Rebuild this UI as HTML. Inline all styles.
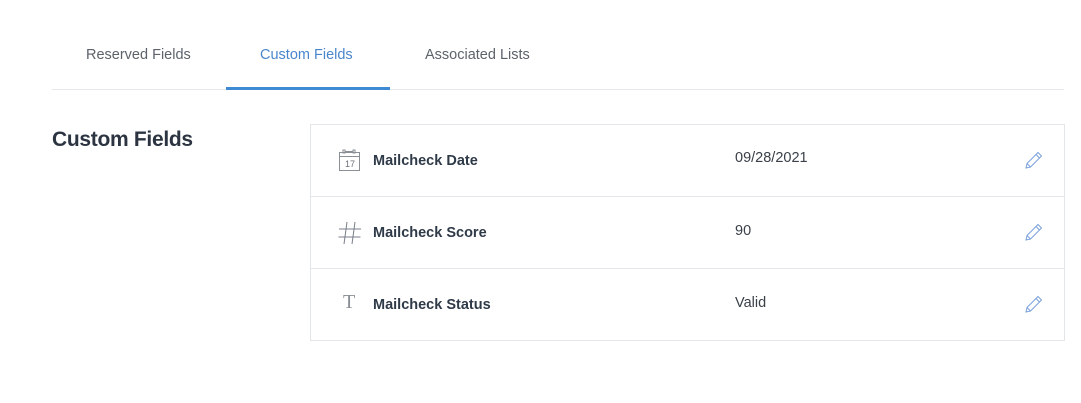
<!DOCTYPE html>
<html><head><style>
*{margin:0;padding:0;box-sizing:border-box}
body{width:1081px;height:403px;background:#fff;font-family:"Liberation Sans",sans-serif;position:relative;overflow:hidden}
.tab{position:absolute;top:47px;font-size:14.5px;color:#5c636b}
.line{position:absolute;left:52px;top:89px;width:1012px;height:1px;background:#e6e8eb}
.ul{position:absolute;left:226px;top:87px;width:164px;height:3px;background:#3f8bd3}
h2{position:absolute;left:52px;top:128px;font-size:21px;font-weight:bold;color:#2b3440;letter-spacing:-0.3px}
.card{position:absolute;left:310px;top:124px;width:755px;height:217px;border:1px solid #e3e6e9}
.row{position:absolute;left:0;width:753px;height:72px;border-bottom:1px solid #e3e6e9}
.row:last-child{border-bottom:none}
.name{position:absolute;left:62px;font-size:14.5px;font-weight:bold;color:#2f3a48}
.val{position:absolute;left:424px;font-size:14.5px;color:#3a4048}
.ic{position:absolute;left:26px}
.pen{position:absolute;left:712px}
</style></head><body>
<div class="tab" style="left:86px">Reserved Fields</div>
<div class="tab" style="left:260px;color:#4a86cc">Custom Fields</div>
<div class="tab" style="left:425px">Associated Lists</div>
<div class="line"></div><div class="ul"></div>
<h2>Custom Fields</h2>
<div class="card">
 <div class="row" style="top:0">
  <svg class="ic" style="top:23px" width="24" height="24" viewBox="0 0 24 24" fill="none" stroke="#8a8f96" stroke-width="1"><rect x="2.5" y="4.5" width="20" height="18"/><line x1="2.5" y1="8.5" x2="22.5" y2="8.5"/><rect x="6" y="2" width="2" height="3"/><rect x="16" y="2" width="2" height="3"/><line x1="8" y1="3.5" x2="16" y2="3.5"/><text x="8" y="19" font-size="9" fill="#6a7078" stroke="none" font-family="Liberation Sans">17</text></svg>
  <div class="name" style="top:28px">Mailcheck Date</div>
  <div class="val" style="top:25px">09/28/2021</div>
  <svg class="pen" style="top:24px" width="22" height="22" viewBox="0 0 22 22" fill="none" stroke="#7aa0db" stroke-width="1"><path d="M3 19 L4 14.5 L15 3.5 L18.5 7 L7.5 18 Z M13 5.5 L16.5 9 M4 14.5 L7.5 18"/></svg>
 </div>
 <div class="row" style="top:72px">
  <svg class="ic" style="top:23px" width="26" height="26" viewBox="0 0 26 26" fill="none" stroke="#7a8088" stroke-width="1"><path d="M10 2 L7 24 M18 2 L15 24 M2 9 L24 9 M1.5 17 L23.5 17"/></svg>
  <div class="name" style="top:28px">Mailcheck Score</div>
  <div class="val" style="top:26px">90</div>
  <svg class="pen" style="top:24px" width="22" height="22" viewBox="0 0 22 22" fill="none" stroke="#7aa0db" stroke-width="1"><path d="M3 19 L4 14.5 L15 3.5 L18.5 7 L7.5 18 Z M13 5.5 L16.5 9 M4 14.5 L7.5 18"/></svg>
 </div>
 <div class="row" style="top:144px">
  <div class="ic" style="top:22px;left:32px;font-family:'Liberation Serif',serif;font-size:20px;color:#8a8f96">T</div>
  <div class="name" style="top:28px">Mailcheck Status</div>
  <div class="val" style="top:26px">Valid</div>
  <svg class="pen" style="top:24px" width="22" height="22" viewBox="0 0 22 22" fill="none" stroke="#7aa0db" stroke-width="1"><path d="M3 19 L4 14.5 L15 3.5 L18.5 7 L7.5 18 Z M13 5.5 L16.5 9 M4 14.5 L7.5 18"/></svg>
 </div>
</div>
</body></html>
